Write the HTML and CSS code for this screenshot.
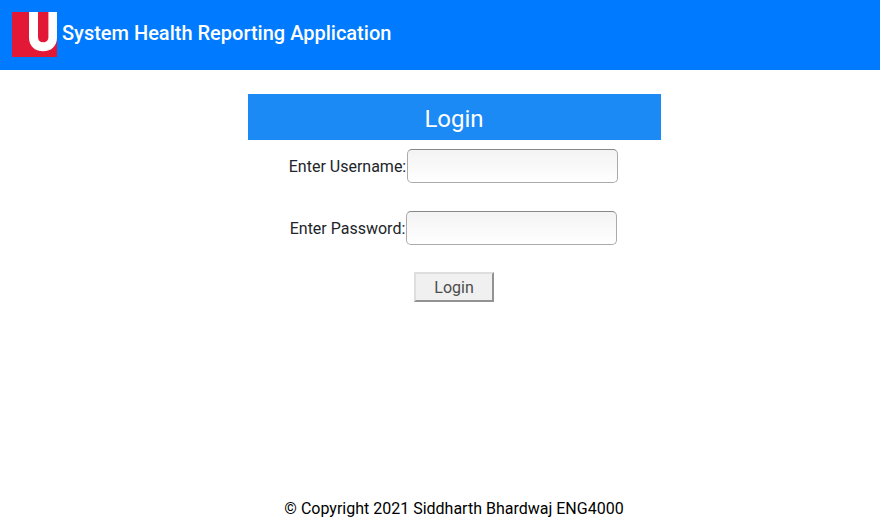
FILE: index.html
```html
<!DOCTYPE html>
<html lang="en">
<head>
<meta charset="utf-8">
<title>System Health Reporting Application</title>
<link rel="stylesheet" href="styles.css">
</head>
<body>
<header class="navbar">
  <svg class="logo" viewBox="0 0 45 45" aria-hidden="true">
    <rect width="45" height="45" fill="#e31837"/>
    <path d="M17 0H26V25C26 28.500 28 30.300 31.200 30.300S36.400 28.500 36.400 25V0H45V25.500C45 34 39.500 39.300 31.100 39.300S17 34 17 25.500Z" fill="#fff"/>
  </svg>
  <span class="brand">System Health Reporting Application</span>
</header>
<main class="login">
  <h1 class="login-title">Login</h1>
  <form class="login-form">
    <div class="field"><label for="user">Enter Username:</label><input id="user" type="text"></div>
    <div class="field"><label for="pass">Enter Password:</label><input id="pass" type="password"></div>
    <button class="submit" type="button">Login</button>
  </form>
</main>
<footer class="footer">© Copyright 2021 Siddharth Bhardwaj ENG4000</footer>
</body>
</html>
```
FILE: styles.css
```css
* {
  box-sizing: border-box;
}

body {
  margin: 0;
  height: 522px;
  display: flex;
  flex-direction: column;
  overflow: hidden;
  background: #fff;
  color: #212529;
  font: 16px/24px Roboto, sans-serif;
}

.navbar {
  display: flex;
  height: 70px;
  flex: none;
  padding: 12px;
  gap: 5px;
  background: #007bff;
}

.logo {
  width: 45px;
  height: 45px;
}

.brand {
  padding-top: 6px;
  color: #fff;
  font-size: 20px;
  font-weight: 500;
  line-height: 30px;
}

.login {
  width: 413px;
  margin: 24px 0 0 248px;
}

.login-title {
  height: 46px;
  margin: 0;
  padding: 11px 1px 0 0;
  background: #1b8af5;
  color: #fff;
  font-size: 24px;
  font-weight: 400;
  line-height: 29px;
  text-align: center;
}

.login-form {
  display: flex;
  flex-direction: column;
  align-items: center;
  gap: 28px;
  padding: 9px 2px 0 0;
}

.field {
  display: flex;
  align-items: center;
  height: 34px;
}

.field label {
  margin-left: -0.5px;
  padding: 2px 0.5px 0 0;
}

.field input {
  width: 211px;
  height: 34px;
  margin: 0;
  padding: 6px;
  border: 1px solid #aaa;
  border-top-color: #888;
  border-radius: 5px;
  outline: none;
  background: linear-gradient(#f3f3f3, #fff);
}

.submit {
  width: 80px;
  height: 30px;
  margin-top: -1px;
  padding: 2px 0 0 1px;
  border: 2px solid;
  border-color: #dedede #929292 #929292 #dedede;
  background: #f0f0f0;
  color: #4c4c4c;
  font: inherit;
}

.footer {
  margin-top: auto;
  padding: 0 0 1px 28px;
  color: #000;
  text-align: center;
}
```
